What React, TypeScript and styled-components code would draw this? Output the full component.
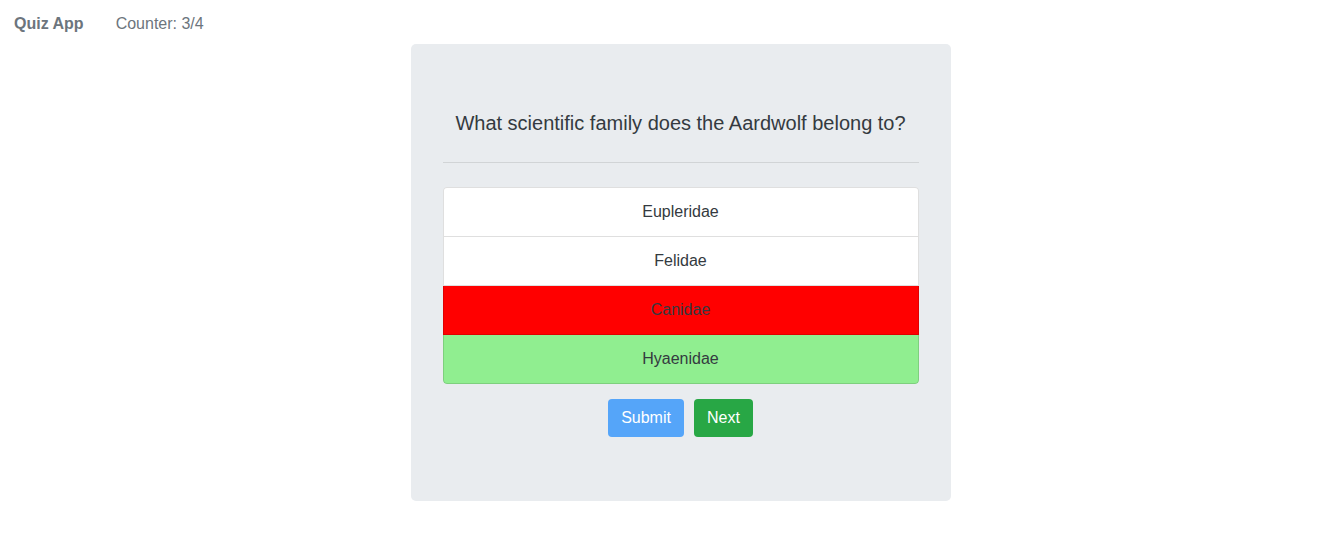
import styled, { createGlobalStyle } from "styled-components";

const GlobalStyle = createGlobalStyle`
  body {
    margin: 0;
    font-family: "Liberation Sans", Arial, sans-serif;
    font-size: 16px;
    line-height: 1.5;
    color: #212529;
    background: #fff;
  }
`;

const NavBar = styled.nav`
  display: flex;
  align-items: center;
  gap: 32px;
  height: 44px;
  padding: 4px 14px 0;
  box-sizing: border-box;
  color: #6c757d;
`;

const Brand = styled.span`
  font-weight: 700;
`;

const Counter = styled.span``;

const Jumbotron = styled.div`
  width: 540px;
  margin-left: calc(50% - 258px);
  box-sizing: border-box;
  padding: 64px 32px;
  background: #e9ecef;
  border-radius: 5px;
`;

const Question = styled.h5`
  margin: 3px 0 0;
  font-size: 20px;
  font-weight: 400;
  line-height: 24px;
  text-align: center;
  color: #343a40;
`;

const Divider = styled.hr`
  margin: 27px 0 24px;
  border: 0;
  border-top: 1px solid rgba(0, 0, 0, 0.1);
`;

const AnswerList = styled.ul`
  list-style: none;
  margin: 0;
  padding: 0;
  display: flex;
  flex-direction: column;
  border-radius: 4px;
  overflow: hidden;
`;

type AnswerState = "idle" | "wrong" | "right";

const answerBg: Record<AnswerState, string> = {
  idle: "#fff",
  wrong: "#ff0000",
  right: "#90ee90",
};

const Answer = styled.li<{ $state: AnswerState }>`
  padding: 12px 20px;
  text-align: center;
  line-height: 24px;
  color: #343a40;
  background: ${({ $state }) => answerBg[$state]};
  border: 1px solid rgba(0, 0, 0, 0.125);
  border-top-width: 0;
  cursor: pointer;

  &:first-child {
    border-top-width: 1px;
    border-radius: 4px 4px 0 0;
  }
  &:last-child {
    border-radius: 0 0 4px 4px;
  }
`;

const Actions = styled.div`
  display: flex;
  justify-content: center;
  gap: 10px;
  margin-top: 15px;
`;

const Button = styled.button<{ $color: string }>`
  height: 38px;
  padding: 6px 13px;
  font-family: inherit;
  font-size: 16px;
  line-height: 24px;
  color: #fff;
  background: ${({ $color }) => $color};
  border: 0;
  border-radius: 4px;
  cursor: pointer;
`;

const answers: { text: string; state: AnswerState }[] = [
  { text: "Eupleridae", state: "idle" },
  { text: "Felidae", state: "idle" },
  { text: "Canidae", state: "wrong" },
  { text: "Hyaenidae", state: "right" },
];

export default function App() {
  return (
    <>
      <GlobalStyle />
      <NavBar>
        <Brand>Quiz App</Brand>
        <Counter>Counter: 3/4</Counter>
      </NavBar>
      <Jumbotron>
        <Question>What scientific family does the Aardwolf belong to?</Question>
        <Divider />
        <AnswerList>
          {answers.map((a) => (
            <Answer key={a.text} $state={a.state}>
              {a.text}
            </Answer>
          ))}
        </AnswerList>
        <Actions>
          <Button $color="#55a5f9">Submit</Button>
          <Button $color="#28a745">Next</Button>
        </Actions>
      </Jumbotron>
    </>
  );
}
